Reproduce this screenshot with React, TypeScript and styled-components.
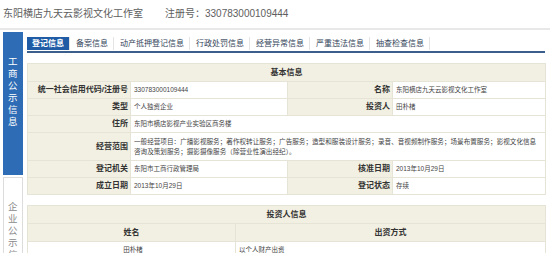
import React, { FC } from "react";
import styled, { createGlobalStyle } from "styled-components";

const GlobalStyle = createGlobalStyle`
  body {
    margin: 0;
    background: #fff;
    font-family: "Liberation Sans", "Noto Sans CJK SC", sans-serif;
  }
`;

const tabs = [
  "登记信息",
  "备案信息",
  "动产抵押登记信息",
  "行政处罚信息",
  "经营异常信息",
  "严重违法信息",
  "抽查检查信息",
];

const App: FC = () => {
  return (
    <Page>
      <GlobalStyle />
      <TitleRow>
        <Company>东阳横店九天云影视文化工作室</Company>
        <RegNo>注册号：330783000109444</RegNo>
      </TitleRow>
      <Main>
        <Side>
          <SidePanel $active>
            <SideText>工商公示信息</SideText>
          </SidePanel>
          <SidePanel>
            <SideText>企业公示信息</SideText>
          </SidePanel>
        </Side>
        <Content>
          <TabBar>
            {tabs.map((t, i) => (
              <Tab key={t} $active={i === 0}>
                {t}
              </Tab>
            ))}
          </TabBar>

          <InfoTable>
            <colgroup>
              <col style={{ width: 103 }} />
              <col style={{ width: 157 }} />
              <col style={{ width: 105 }} />
              <col style={{ width: 153 }} />
            </colgroup>
            <tbody>
              <tr>
                <Head colSpan={4}>基本信息</Head>
              </tr>
              <tr>
                <Label>统一社会信用代码/注册号</Label>
                <Value>330783000109444</Value>
                <Label>名称</Label>
                <Value>东阳横店九天云影视文化工作室</Value>
              </tr>
              <tr>
                <Label>类型</Label>
                <Value>个人独资企业</Value>
                <Label>投资人</Label>
                <Value>田朴楮</Value>
              </tr>
              <tr>
                <Label>住所</Label>
                <Value colSpan={3}>东阳市横店影视产业实验区商务楼</Value>
              </tr>
              <tr>
                <Label $tall>经营范围</Label>
                <Value colSpan={3}>
                  <Line>
                    一般经营项目：广播影视服务；著作权转让服务；广告服务；造型和服装设计服务；录音、音视频制作服务；场景布置服务；影视文化信息
                  </Line>
                  <Line>咨询及策划服务；摄影摄像服务（除营业性演出经纪）。</Line>
                </Value>
              </tr>
              <tr>
                <Label>登记机关</Label>
                <Value>东阳市工商行政管理局</Value>
                <Label>核准日期</Label>
                <Value>2013年10月29日</Value>
              </tr>
              <tr>
                <Label>成立日期</Label>
                <Value>2013年10月29日</Value>
                <Label>登记状态</Label>
                <Value>存续</Value>
              </tr>
            </tbody>
          </InfoTable>

          <InvestorTable>
            <colgroup>
              <col style={{ width: 208 }} />
              <col style={{ width: 310 }} />
            </colgroup>
            <tbody>
              <tr>
                <Head colSpan={2}>投资人信息</Head>
              </tr>
              <tr>
                <ColHead>姓名</ColHead>
                <ColHead>出资方式</ColHead>
              </tr>
              <tr>
                <Value $center>田朴楮</Value>
                <Value>以个人财产出资</Value>
              </tr>
            </tbody>
          </InvestorTable>
        </Content>
      </Main>
    </Page>
  );
};

export default App;

const Page = styled.div`
  width: 550px;
  height: 253px;
  overflow: hidden;
`;

const TitleRow = styled.div`
  display: flex;
  align-items: center;
  height: 30px;
  padding: 0 0 0 3px;
  border-bottom: 2px solid #e8e8e8;
  box-sizing: border-box;
  color: #5e5e5e;
  font-size: 10px;
  line-height: 12px;
`;

const Company = styled.span`
  padding-bottom: 1px;
`;

const RegNo = styled.span`
  margin-left: 22px;
  padding-bottom: 1px;
`;

const Main = styled.div`
  display: flex;
  gap: 4px;
  padding: 0 0 0 3px;
`;

const Side = styled.div`
  width: 20px;
  display: flex;
  flex-direction: column;
  gap: 2px;
  padding-top: 2px;
`;

const SidePanel = styled.div<{ $active?: boolean }>`
  box-sizing: border-box;
  height: ${p => (p.$active ? "143px" : "120px")};
  padding-top: 22px;
  display: flex;
  justify-content: center;
  align-items: flex-start;
  background: ${p => (p.$active ? "#2e6cb5" : "#fff")};
  border: 1px solid ${p => (p.$active ? "#2e6cb5" : "#dcdcdc")};
  color: ${p => (p.$active ? "#fff" : "#8a8a8a")};
`;

const SideText = styled.div`
  width: 10px;
  font-family: "Noto Sans CJK SC", sans-serif;
  font-size: 9.5px;
  line-height: 12px;
  word-break: break-all;
`;

const Content = styled.div`
  width: 518px;
  padding-top: 7px;
`;

const TabBar = styled.div`
  display: flex;
  border-bottom: 2px solid #3b5f8c;
  padding-bottom: 1px;
`;

const Tab = styled.div<{ $active?: boolean }>`
  height: 13px;
  line-height: 13px;
  padding: 0 5px;
  margin-right: 1px;
  font-size: 8px;
  font-weight: ${p => (p.$active ? 700 : 400)};
  color: ${p => (p.$active ? "#fff" : "#34445a")};
  background: ${p => (p.$active ? "#1f5ca5" : "#fff")};
  border-right: 1px solid #e4e4e4;
  white-space: nowrap;
`;

const InfoTable = styled.table`
  width: 518px;
  margin-top: 10px;
  border-collapse: collapse;
  table-layout: fixed;
  border: 1px solid #e2e0d2;
`;

const InvestorTable = styled(InfoTable)`
  margin-top: 10px;
`;

const Head = styled.td`
  height: 17px;
  padding: 0;
  background: #f2f0e2;
  border: 1px solid #e6e4d6;
  text-align: center;
  font-size: 8px;
  font-weight: 700;
  color: #333;
  line-height: 12px;
`;

const ColHead = styled(Head)`
  border-top: 1px solid #e0ded0;
`;

const Label = styled.td<{ $tall?: boolean }>`
  height: ${p => (p.$tall ? "27px" : "16px")};
  padding: 0 2px 0 0;
  background: #f2f0e2;
  border: 1px solid #e6e4d6;
  text-align: right;
  font-size: 8px;
  font-weight: 700;
  color: #333;
  line-height: 12px;
  white-space: nowrap;
`;

const Value = styled.td<{ $center?: boolean }>`
  height: 16px;
  padding: 0 0 0 3px;
  background: #fff;
  border: 1px solid #e6e4d6;
  text-align: ${p => (p.$center ? "center" : "left")};
  font-size: 6.5px;
  color: #444;
  line-height: 10px;
  white-space: nowrap;
  overflow: hidden;
`;

const Line = styled.div`
  white-space: nowrap;
  font-size: 6.6px;
  line-height: 10px;
`;
